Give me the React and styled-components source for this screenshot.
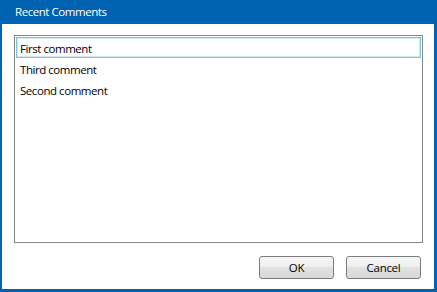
import styled, { createGlobalStyle } from "styled-components";

const GlobalStyle = createGlobalStyle`
  html, body {
    margin: 0;
    padding: 0;
    background: #ffffff;
  }
  body {
    font-family: "Open Sans", "Noto Sans", sans-serif;
  }
`;

const comments = ["First comment", "Third comment", "Second comment"];

function App() {
  return (
    <>
      <GlobalStyle />
      <Window>
        <TitleBar>Recent Comments</TitleBar>
        <Body>
          <ListBox>
            {comments.map((text, i) => (
              <Item key={text} selected={i === 0}>
                {text}
              </Item>
            ))}
          </ListBox>
          <Buttons>
            <Button>OK</Button>
            <Button>Cancel</Button>
          </Buttons>
        </Body>
      </Window>
    </>
  );
}

export default App;

const Window = styled.div`
  width: 437px;
  height: 292px;
  box-sizing: border-box;
  background: #0063b1;
  padding: 0 3px 3px 2px;
  display: flex;
  flex-direction: column;
`;

const TitleBar = styled.div`
  height: 24px;
  display: flex;
  align-items: center;
  padding: 0 0 1px 13px;
  box-sizing: border-box;
  color: #ffffff;
  font-size: 11.5px;
  letter-spacing: -0.45px;
`;

const Body = styled.div`
  flex: 1;
  background: #ffffff;
  display: flex;
  flex-direction: column;
  padding: 11px 11px 10px 12px;
`;

const ListBox = styled.div`
  height: 208px;
  box-sizing: border-box;
  border: 1px solid #828790;
  padding: 1px;
  display: flex;
  flex-direction: column;
`;

const Item = styled.div`
  height: 21px;
  flex-shrink: 0;
  box-sizing: border-box;
  display: flex;
  align-items: center;
  padding: 1px 0 0 3px;
  font-size: 11.5px;
  letter-spacing: -0.45px;
  color: #000000;
  border: 1px solid ${(p) => (p.selected ? "#7ec4d8" : "transparent")};
  outline: ${(p) => (p.selected ? "1px solid #d4ebf2" : "none")};
  outline-offset: -2px;
`;

const Buttons = styled.div`
  display: flex;
  justify-content: flex-end;
  gap: 12px;
  margin: 13px 2px 0 0;
`;

const Button = styled.button`
  width: 75px;
  height: 23px;
  border: 1px solid #7a7a7a;
  border-radius: 3px;
  background: linear-gradient(#f6f6f6 0%, #eeeeee 50%, #e2e2e2 50%, #d8d8d8 100%);
  font-family: "Open Sans", "Noto Sans", sans-serif;
  font-size: 11.5px;
  letter-spacing: -0.3px;
  color: #000000;
  padding: 0;
`;
